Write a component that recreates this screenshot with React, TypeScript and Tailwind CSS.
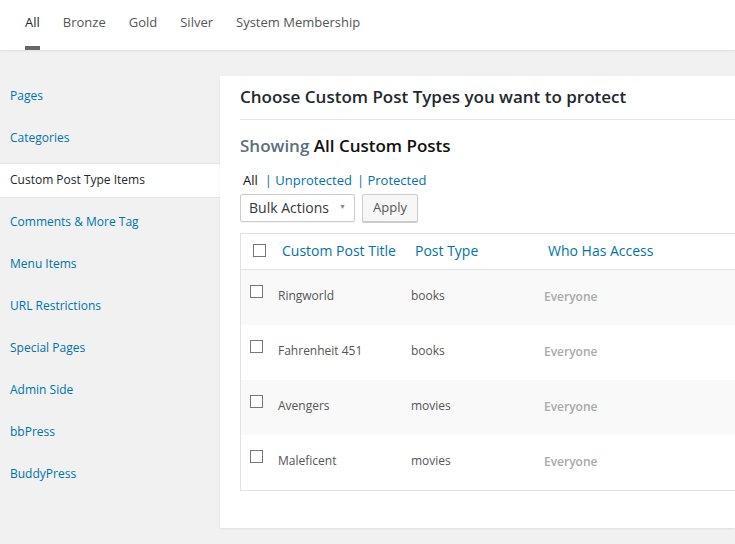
const tabs = ['All', 'Bronze', 'Gold', 'Silver', 'System Membership']

const sideItems = [
  'Pages',
  'Categories',
  'Custom Post Type Items',
  'Comments & More Tag',
  'Menu Items',
  'URL Restrictions',
  'Special Pages',
  'Admin Side',
  'bbPress',
  'BuddyPress',
]

const rows = [
  { title: 'Ringworld', type: 'books' },
  { title: 'Fahrenheit 451', type: 'books' },
  { title: 'Avengers', type: 'movies' },
  { title: 'Maleficent', type: 'movies' },
]

function Checkbox({ className = '' }: { className?: string }) {
  return <span className={`block w-[13px] h-[13px] border border-[#777] bg-white ${className}`} />
}

export default function App() {
  return (
    <div className="w-[735px] h-[544px] overflow-hidden bg-[#f1f1f1] font-['Open_Sans',sans-serif]">
      {/* top tabs */}
      <div className="h-[50px] bg-white shadow-[0_1px_2px_rgba(0,0,0,0.08)] flex pl-[25px] gap-[23px] relative z-10">
        {tabs.map((t, i) => (
          <div key={t} className="relative pt-[9px]">
            <span className={`text-[13px] ${i === 0 ? 'text-[#23282d]' : 'text-[#555]'}`}>{t}</span>
            {i === 0 && <span className="absolute left-0 bottom-0 w-[15px] h-[4px] bg-[#666]" />}
          </div>
        ))}
      </div>

      <div className="flex pt-[26px]">
        {/* sidebar */}
        <div className="w-[220px] shrink-0 -mt-[1px]">
          {sideItems.map((s) => {
            const active = s === 'Custom Post Type Items'
            return (
              <div key={s} className="h-[42px] flex items-center">
                {active ? (
                  <div className="w-full h-[35px] flex items-center pl-[10px] bg-white border-y border-[#e5e5e5] text-[12px] text-[#23282d]">
                    {s}
                  </div>
                ) : (
                  <span className="pl-[10px] text-[12px] text-[#0073aa]">{s}</span>
                )}
              </div>
            )
          })}
        </div>

        {/* main panel */}
        <div className="flex-1 bg-white h-[452px] shadow-[0_1px_2px_rgba(0,0,0,0.08)] pl-[20px]">
          <div className="h-[44px] flex items-center border-b border-[#e5e5e5]">
            <h2 className="text-[17px] font-semibold text-[#23282d] -mt-[2px]">
              Choose Custom Post Types you want to protect
            </h2>
          </div>
          <div className="pt-[13px] text-[17px] font-semibold">
            <span className="text-[#5a6e7c]">Showing</span> <span className="text-[#111]">All Custom Posts</span>
          </div>
          <div className="mt-[12px] text-[13px] pl-[3px] leading-[18px]">
            <span className="text-[#111]">All</span>
            <span className="text-[#0073aa] ml-[7px]">| Unprotected</span>
            <span className="text-[#0073aa] ml-[5px]">| Protected</span>
          </div>
          <div className="flex gap-[7px] mt-[5px]">
            <div className="w-[115px] h-[28px] border border-[#ccc] rounded-[2px] shadow-[0_1px_1px_rgba(0,0,0,0.05)] flex items-center justify-between pl-[8px] pr-[8px] text-[14px] text-[#32373c]">
              <span>Bulk Actions</span>
              <span className="text-[#888] text-[7px]">▼</span>
            </div>
            <div className="w-[56px] h-[28px] border border-[#ccc] rounded-[2px] bg-[#f7f7f7] flex items-center justify-center text-[13px] text-[#555] shadow-[0_1px_0_#ccc]">
              Apply
            </div>
          </div>

          {/* table */}
          <div className="mt-[11px] border border-[#e1e1e1] border-r-0">
            <div className="h-[36px] grid grid-cols-[41px_133px_133px_1fr] items-center border-b border-[#e1e1e1] text-[14px] text-[#0073aa]">
              <Checkbox className="ml-[12px] -mt-[2px]" />
              <span className="-mt-[2px]">Custom Post Title</span>
              <span className="-mt-[2px]">Post Type</span>
              <span className="-mt-[2px]">Who Has Access</span>
            </div>
            {rows.map((r, i) => (
              <div
                key={r.title}
                className={`h-[55px] grid grid-cols-[37px_133px_133px_1fr] items-start pt-[15px] text-[12px] ${
                  i % 2 === 0 ? 'bg-[#f9f9f9]' : 'bg-white'
                }`}
              >
                <Checkbox className="ml-[9px]" />
                <span className="text-[#555] mt-[2px]">{r.title}</span>
                <span className="text-[#555] mt-[2px]">{r.type}</span>
                <span className="text-[#aaa] mt-[3px] font-semibold">Everyone</span>
              </div>
            ))}
          </div>
        </div>
      </div>
    </div>
  )
}
